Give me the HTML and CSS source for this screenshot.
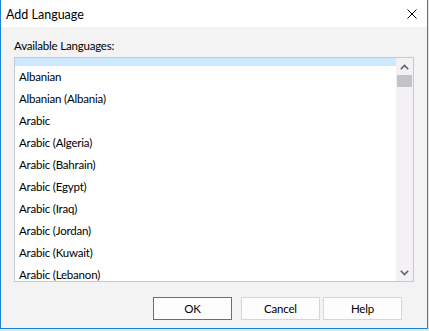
FILE: index.html
```html
<!DOCTYPE html>
<html>
<head>
<meta charset="utf-8">
<link rel="stylesheet" href="styles.css">
</head>
<body>
<div class="window">
  <div class="titlebar">
    <span class="title">Add Language</span>
    <svg class="close" width="10" height="10" viewBox="0 0 10 10"><path d="M0.5 0.5L9.5 9.5M9.5 0.5L0.5 9.5" stroke="#000" stroke-width="1" fill="none"/></svg>
  </div>
  <div class="content">
    <div class="label">Available Languages:</div>
    <div class="listbox">
      <div class="viewport">
        <ul class="items">
          <li class="selected">&nbsp;</li>
          <li>Albanian</li>
          <li>Albanian (Albania)</li>
          <li>Arabic</li>
          <li>Arabic (Algeria)</li>
          <li>Arabic (Bahrain)</li>
          <li>Arabic (Egypt)</li>
          <li>Arabic (Iraq)</li>
          <li>Arabic (Jordan)</li>
          <li>Arabic (Kuwait)</li>
          <li>Arabic (Lebanon)</li>
        </ul>
      </div>
      <div class="scrollbar">
        <div class="arrow"><svg width="9" height="6" viewBox="0 0 9 6"><path d="M0.8 5.2L4.5 1.5L8.2 5.2" stroke="#606060" stroke-width="1.6" fill="none"/></svg></div>
        <div class="track"><div class="thumb"></div></div>
        <div class="arrow"><svg width="9" height="6" viewBox="0 0 9 6"><path d="M0.8 0.8L4.5 4.5L8.2 0.8" stroke="#606060" stroke-width="1.6" fill="none"/></svg></div>
      </div>
    </div>
    <div class="buttons">
      <button class="btn default">OK</button>
      <button class="btn cancel">Cancel</button>
      <button class="btn">Help</button>
    </div>
  </div>
</div>
</body>
</html>
```
FILE: styles.css
```css
html, body {
  margin: 0;
  padding: 0;
  background: #e6e6e6;
}
body {
  font-family: "Lato", "Liberation Sans", Arial, sans-serif;
  font-size: 11.5px;
  letter-spacing: -0.2px;
  color: #000;
}
.window {
  width: 426px;
  height: 328px;
  border: 1px solid #1b84d8;
  border-top: none;
  background: #f3f3f3;
  display: flex;
  flex-direction: column;
}
.titlebar {
  height: 27px;
  background: #fff;
  display: flex;
  align-items: center;
  justify-content: space-between;
  padding: 0 10px 0 5px;
}
.title {
  font-size: 12.5px;
  letter-spacing: 0;
  margin-top: 1px;
}
.close {
  display: block;
}
.content {
  flex: 1;
  display: flex;
  flex-direction: column;
  padding: 0 0 0 13px;
}
.label {
  height: 30px;
  line-height: 14px;
  padding-top: 12px;
  box-sizing: border-box;
}
.listbox {
  width: 398px;
  height: 223px;
  border: 1px solid #c8c8c8;
  background: #fff;
  display: flex;
}
.viewport {
  flex: 1;
  overflow: hidden;
}
.items {
  list-style: none;
  margin: -14px 0 0 0;
  padding: 0;
}
.items li {
  height: 22px;
  line-height: 22px;
  padding-left: 4px;
  white-space: nowrap;
}
.items li.selected {
  background: #cce8ff;
}
.scrollbar {
  width: 17px;
  background: #f4f1f6;
  display: flex;
  flex-direction: column;
}
.arrow {
  height: 17px;
  display: flex;
  align-items: center;
  justify-content: center;
}
.arrow svg { display: block; }
.track {
  flex: 1;
  padding: 0 1px;
}
.thumb {
  height: 12px;
  background: #c2c3c9;
}
.buttons {
  display: flex;
  justify-content: flex-end;
  padding: 15px 25px 0 0;
}
.btn {
  width: 79px;
  height: 23px;
  box-sizing: border-box;
  border: 1px solid #d6d6d6;
  background: #fdfdfd;
  font-family: "Lato", "Liberation Sans", Arial, sans-serif;
  font-size: 11.5px;
  letter-spacing: -0.2px;
  color: #000;
  padding: 0;
  margin: 0;
}
.btn.default {
  border-color: #1b84d8;
  margin-right: 9px;
}
.btn.cancel {
  margin-right: 3px;
}
```
